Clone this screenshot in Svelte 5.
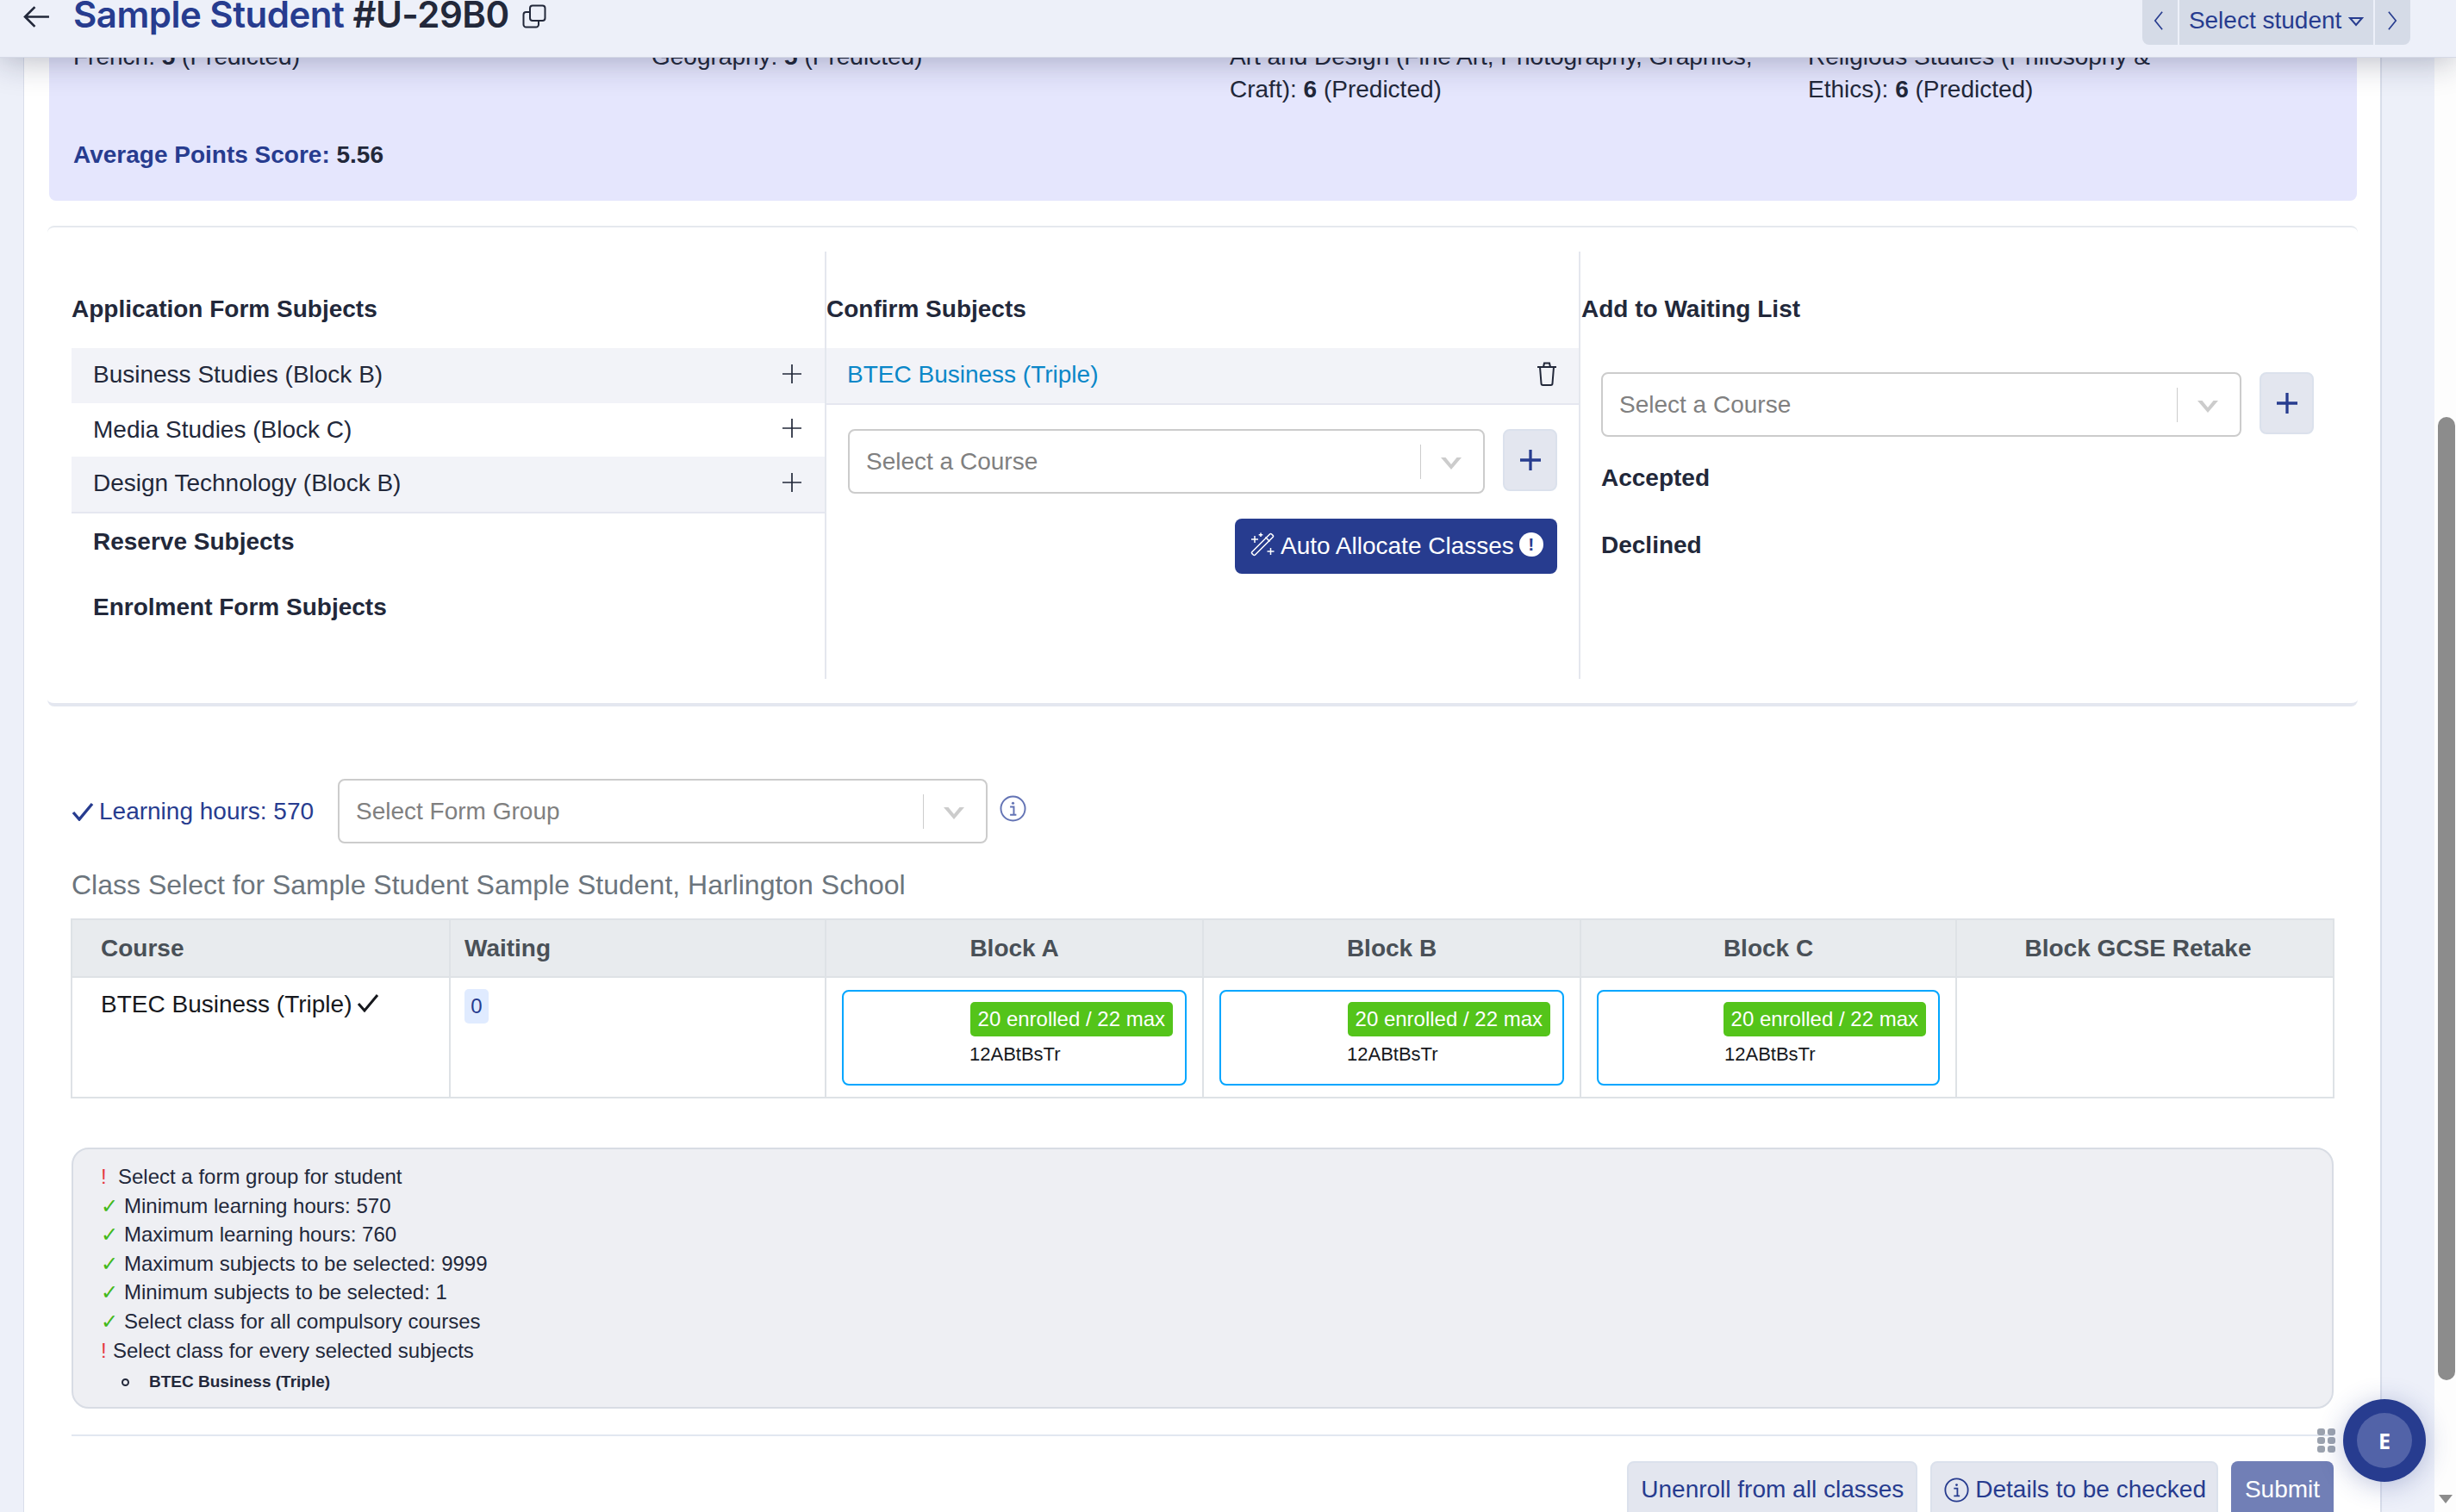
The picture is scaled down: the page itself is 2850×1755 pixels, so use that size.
<script>
  const predicted = [
    { label: "French:", grade: 5 },
    { label: "Geography:", grade: 5 },
    { label: "Art and Design (Fine Art, Photography, Graphics, Craft):", grade: 6 },
    { label: "Religious Studies (Philosophy & Ethics):", grade: 6 },
  ];
  const appSubjects = ["Business Studies (Block B)", "Media Studies (Block C)", "Design Technology (Block B)"];
  const blocks = ["Block A", "Block B", "Block C"];
  const checks = [
    { ok: false, text: "Select a form group for student", cls: "wide" },
    { ok: true, text: "Minimum learning hours: 570" },
    { ok: true, text: "Maximum learning hours: 760" },
    { ok: true, text: "Maximum subjects to be selected: 9999" },
    { ok: true, text: "Minimum subjects to be selected: 1" },
    { ok: true, text: "Select class for all compulsory courses" },
    { ok: false, text: "Select class for every selected subjects" },
  ];
</script>

{#snippet chevron()}
  <svg class="chev" viewBox="0 0 24 14"><path d="M0 0H5.500L12 8L18.500 0H24L12 14Z" fill="#ccc" /></svg>
{/snippet}

{#snippet select(text, cls)}
  <div class="select {cls}">
    <span class="ph">{text}</span>
    <i class="sep"></i>
    {@render chevron()}
  </div>
{/snippet}

{#snippet plus(cls)}
  <svg class={cls} viewBox="0 0 22 22"><path d="M11 0V22M0 11H22" fill="none" stroke="currentColor" /></svg>
{/snippet}

{#snippet info(cls)}
  <svg class={cls} viewBox="0 0 32 32">
    <circle cx="16" cy="16" r="14.5" fill="none" stroke="currentColor" stroke-width="2" />
    <circle cx="16" cy="9.5" r="1.6" fill="currentColor" />
    <path d="M12.5 14H17V23M12.5 23.5H20" fill="none" stroke="currentColor" stroke-width="2" />
  </svg>
{/snippet}

<div class="screen">
  <header>
    <svg class="back" viewBox="0 0 30 26"><path d="M29 13H2M13 2 L2 13 L13 24" fill="none" stroke="#22283a" stroke-width="2.6" /></svg>
    <h1><span>Sample Student</span> #U-29B0</h1>
    <svg class="copy" viewBox="0 0 28 28">
      <rect x="9" y="1.5" width="17.5" height="17.5" rx="3" fill="none" stroke="#22283a" stroke-width="2" />
      <path d="M9 9H4.500A3 3 0 0 0 1.500 12V23.500A3 3 0 0 0 4.500 26.500H16A3 3 0 0 0 19 23.500V19" fill="none" stroke="#22283a" stroke-width="2" />
    </svg>
    <nav class="picker">
      <button class="arrow prev"><svg viewBox="0 0 14 26"><path d="M12 2 L3 13 L12 24" fill="none" stroke="currentColor" stroke-width="1.800" /></svg></button>
      <button class="mid">Select student <svg viewBox="0 0 18 12"><path d="M2 2H16L9 10Z" fill="none" stroke="currentColor" stroke-width="2" /></svg></button>
      <button class="arrow"><svg viewBox="0 0 14 26"><path d="M2 2 L11 13 L2 24" fill="none" stroke="currentColor" stroke-width="1.800" /></svg></button>
    </nav>
  </header>

  <div class="main">
    <div class="panel">
      <section class="scores">
        <div class="score-grid">
          {#each predicted as p}
            <p>{p.label} <b>{p.grade}</b> (Predicted)</p>
          {/each}
        </div>
        <p class="average"><b>Average Points Score:</b> <strong>5.56</strong></p>
      </section>

      <section class="subjects">
        <div class="col first">
          <h3>Application Form Subjects</h3>
          <ul>
            {#each appSubjects as s, i}
              <li class:shade={i % 2 === 0} class:last={i === 2}>{s}{@render plus("plus")}</li>
            {/each}
          </ul>
          <h4 class="reserve">Reserve Subjects</h4>
          <h4 class="enrol">Enrolment Form Subjects</h4>
        </div>
        <div class="col second">
          <h3>Confirm Subjects</h3>
          <ul>
            <li class="shade last picked">
              BTEC Business (Triple)
              <svg class="bin" viewBox="0 0 24 28"><path d="M1 6H23M4 6 L5.500 25A2 2 0 0 0 7.500 27H16.500A2 2 0 0 0 18.500 25L20 6M8 6 L9 1.500H15L16 6" fill="none" stroke="#22283a" stroke-width="2" /></svg>
            </li>
          </ul>
          <div class="pick-row">
            {@render select("Select a Course", "grow")}
            <button class="add">{@render plus("plus-b")}</button>
          </div>
          <div class="auto-row">
            <button class="auto">
              <svg class="wand" viewBox="0 0 28 28">
                <rect x="-2.500" y="-16" width="5" height="32" rx="1.500" transform="translate(14 14) rotate(45)" fill="none" stroke="#fff" stroke-width="1.500" />
                <path d="M17.500 5.500L22.500 10.500M5 4V12M1 8H9M12 0.500V5M9.700 2.700H14.300M23.500 18V26M19.500 22H27.500" fill="none" stroke="#fff" stroke-width="1.500" />
              </svg>
              <span>Auto Allocate Classes</span>
              <span class="bang">!</span>
            </button>
          </div>
        </div>
        <div class="col third">
          <h3>Add to Waiting List</h3>
          <div class="wait-row">
            {@render select("Select a Course", "grow")}
            <button class="add">{@render plus("plus-b")}</button>
          </div>
          <h4 class="accepted">Accepted</h4>
          <h4 class="declined">Declined</h4>
        </div>
      </section>

      <div class="form-row">
        <svg class="tick" viewBox="0 0 26 22"><path d="M2 12 L9 20 L24 2" fill="none" stroke="#273c8f" stroke-width="3.400" /></svg>
        <span class="hours">Learning hours: 570</span>
        {@render select("Select Form Group", "form-select")}
        {@render info("form-info")}
      </div>

      <h2>Class Select for Sample Student Sample Student, Harlington School</h2>

      <table>
        <colgroup>
          <col class="c-course" /><col class="c-wait" /><col class="c-block" /><col class="c-block" /><col class="c-wait" /><col class="c-block" />
        </colgroup>
        <thead>
          <tr>
            <th class="left">Course</th>
            <th class="left wait">Waiting</th>
            {#each blocks as b}<th>{b}</th>{/each}
            <th class="retake">Block GCSE Retake</th>
          </tr>
        </thead>
        <tbody>
          <tr>
            <td class="course">BTEC Business (Triple) <svg viewBox="0 0 26 22"><path d="M2 12 L9 20 L24 2" fill="none" stroke="#16181d" stroke-width="3" /></svg></td>
            <td class="wait"><span class="zero">0</span></td>
            {#each blocks as b}
              <td class="slot">
                <div class="klass">
                  <span class="count">20 enrolled / 22 max</span>
                  <span class="code">12ABtBsTr</span>
                </div>
              </td>
            {/each}
            <td></td>
          </tr>
        </tbody>
      </table>

      <div class="alert">
        {#each checks as c}
          <div class="check">
            {#if c.ok}<span class="yes">✓</span>{:else}<span class="no" class:wide={c.cls}>!</span>{/if}{c.text}
          </div>
        {/each}
        <ul class="missing"><li>BTEC Business (Triple)</li></ul>
      </div>

      <hr />

      <div class="actions">
        <button class="ghost">Unenroll from all classes</button>
        <button class="ghost details">{@render info("btn-info")}<span>Details to be checked</span></button>
        <button class="submit">Submit</button>
      </div>
    </div>

    <div class="gutter"></div>
  </div>

  <div class="scrollbar">
    <div class="thumb"></div>
    <svg class="down" viewBox="0 0 16 10"><path d="M0 0H16L8 10Z" fill="#8c8c8c" /></svg>
  </div>

  <div class="dots">{#each Array(6) as _}<i></i>{/each}</div>
  <div class="fab"><span>E</span></div>
</div>

<style>
  :global(body) {
    margin: 0;
    overflow: hidden;
    font-family: "Liberation Sans", Arial, sans-serif;
    color: #22283a;
  }
  .screen {
    display: flex;
    height: 1755px;
    overflow: hidden;
    position: relative;
    background: #edf0f9;
  }
  header {
    position: absolute;
    top: 0;
    left: 0;
    right: 0;
    height: 66px;
    padding: 0 53px 0 27px;
    display: flex;
    align-items: flex-start;
    background: #edf0f9;
    border-bottom: 1px solid #d5d9e6;
    box-shadow: 0 2px 40px rgba(20, 25, 60, 0.32);
    z-index: 5;
  }
  .back {
    width: 31px;
    height: 27px;
    margin-top: 6px;
    flex: none;
  }
  h1 {
    margin: 0 15px 0 27px;
    font: 600 42px/34px Inter, sans-serif;
    letter-spacing: -0.5px;
    color: #22283a;
    white-space: nowrap;
  }
  h1 span { color: #273c8f; }
  .copy {
    width: 28px;
    height: 28px;
    margin-top: 5px;
    flex: none;
  }
  .picker {
    margin-left: auto;
    width: 311px;
    height: 52px;
    display: flex;
    background: #d5dbe7;
    border-radius: 0 0 8px 8px;
    color: #273c8f;
  }
  .picker button {
    border: 0;
    background: none;
    color: inherit;
    padding: 0;
    height: 100%;
    font: 28px "Liberation Sans", sans-serif;
    display: flex;
    align-items: center;
    justify-content: center;
  }
  .arrow { width: 41px; flex: none; }
  .arrow svg { width: 13px; height: 24px; margin-top: -4px; }
  .prev svg { margin-left: -5px; }
  .picker .mid {
    flex: 1;
    border-left: 2px solid #edf0f9;
    border-right: 2px solid #edf0f9;
    gap: 8px;
    white-space: pre;
    padding-bottom: 4px;
  }
  .mid svg { width: 18px; height: 12px; margin-left: -8px; margin-top: 2px; }

  .main {
    flex: 1;
    display: flex;
    padding-left: 27px;
    min-width: 0;
  }
  .panel {
    width: 2737px;
    box-sizing: border-box;
    background: #fff;
    border-left: 1px solid #d9deea;
    border-right: 2px solid #d9deea;
    padding: 0 0 0 29px;
    font-size: 28px;
  }
  .gutter { flex: 1; }

  .scores {
    width: 2678px;
    height: 233px;
    box-sizing: border-box;
    padding: 47px 28px 0;
    background: #e5e6fd;
    border-radius: 0 0 8px 8px;
    line-height: 38px;
  }
  .scores p { margin: 0; }
  .score-grid {
    display: grid;
    grid-template-columns: repeat(4, 671px);
    height: 114px;
  }
  .score-grid p { padding-right: 30px; color: #22283a; }
  .score-grid p:last-child { max-width: 440px; }
  .average b { color: #273c8f; }

  .subjects {
    width: 2681px;
    height: 558px;
    margin-top: 29px;
    box-sizing: border-box;
    margin-left: -2px;
    border-top: 2px solid #e5e9ee;
    border-bottom: 4px solid #e4e7f0;
    border-radius: 8px;
    padding: 28px 0;
    display: grid;
    grid-template-columns: 902px 875px 1fr;
  }
  .col { position: relative; }
  .col + .col { border-left: 2px solid #e4e7ee; }
  .first { padding-left: 28px; }
  .third { padding-left: 1px; }
  h3 {
    margin: 0;
    height: 112px;
    padding-top: 48px;
    font-size: 28px;
    line-height: 38px;
    font-weight: 700;
    box-sizing: border-box;
  }
  .col ul { list-style: none; margin: 0; padding: 0; }
  .col li {
    height: 62px;
    line-height: 61px;
    padding-left: 25px;
    position: relative;
  }
  .col li.shade { background: #f2f3f8; height: 64px; }
  .col li.last { border-bottom: 2px solid #e5e7f0; }
  .second li.picked { color: #0a87c8; padding-left: 24px; }
  .plus {
    position: absolute;
    right: 27px;
    top: calc(50% - 13px);
    width: 22px;
    height: 22px;
    color: #22283a;
    stroke-width: 1.7;
  }
  .bin {
    position: absolute;
    right: 25px;
    top: 16px;
    width: 24px;
    height: 28px;
  }
  h4 {
    margin: 0;
    font-size: 28px;
    line-height: 38px;
    font-weight: 700;
  }
  .reserve { margin: 14px 0 0 25px; }
  .enrol { margin: 38px 0 0 25px; }

  .select {
    height: 75px;
    box-sizing: border-box;
    border: 2px solid #ccc;
    border-radius: 8px;
    background: #fff;
    display: flex;
    align-items: center;
    padding-left: 19px;
    position: relative;
  }
  .grow { flex: 1; }
  .ph { flex: 1; color: #808080; }
  .sep { width: 1px; height: 40px; background: #ccc; margin-right: 23px; }
  .chev { width: 24px; height: 14px; margin-right: 25px; margin-top: 4px; }
  .add {
    width: 63px;
    height: 72px;
    padding: 0;
    background: #e3e6ef;
    border: 2px solid #dbe1ec;
    border-radius: 8px;
    color: #273c8f;
    display: flex;
    align-items: center;
    justify-content: center;
  }
  .plus-b { width: 24px; height: 24px; stroke-width: 3; }
  .pick-row {
    display: flex;
    gap: 21px;
    margin: 28px 25px 0 25px;
  }
  .auto-row {
    display: flex;
    justify-content: flex-end;
    margin: 29px 25px 0 0;
  }
  .auto {
    height: 64px;
    width: 374px;
    padding: 0 0 0 18px;
    border: 0;
    border-radius: 8px;
    background: #273c8f;
    color: #fff;
    display: flex;
    align-items: center;
    font: 28px/34px "Liberation Sans", sans-serif;
  }
  .wand { width: 28px; height: 28px; margin-right: 7px; margin-top: -4px; flex: none; }
  .bang {
    width: 28px;
    height: 28px;
    margin-left: 6px;
    margin-top: -4px;
    border-radius: 50%;
    background: #fff;
    color: #273c8f;
    font: 700 21px/28px "Liberation Sans", sans-serif;
    text-align: center;
  }
  .wait-row {
    display: flex;
    gap: 21px;
    margin: 28px 51px 0 23px;
  }
  .accepted { margin: 29px 0 0 23px; }
  .declined { margin: 40px 0 0 23px; }

  .form-row {
    display: flex;
    align-items: center;
    margin: 84px 0 0 26px;
    height: 75px;
    color: #273c8f;
  }
  .tick { width: 26px; height: 22px; margin-right: 6px; flex: none; }
  .hours { width: 277px; white-space: nowrap; }
  .form-select { width: 754px; color: #22283a; }
  .form-info { width: 31px; height: 31px; margin-left: 14px; margin-top: -6px; color: #6373b4; }

  h2 {
    margin: 27px 0 0 26px;
    font-size: 32px;
    font-weight: 400;
    line-height: 42px;
    color: #6c757d;
  }

  table {
    margin: 18px 0 0 25px;
    width: 2625px;
    height: 209px;
    border-collapse: collapse;
    table-layout: fixed;
    font-size: 28px;
  }
  .c-course { width: 439px; }
  .c-wait { width: 436px; }
  .c-block { width: 438px; }
  th, td { border: 2px solid #dee2e6; padding: 0; }
  th {
    background: #e8ebee;
    height: 65px;
    font-weight: 700;
    color: #495057;
  }
  th.left { text-align: left; padding-left: 33px; }
  th.wait { padding-left: 16px; }
  th.retake { padding-right: 16px; }
  td { vertical-align: top; }
  .course { padding: 14px 0 0 33px; color: #16181d; line-height: 34px; }
  .course svg { width: 26px; height: 22px; margin-left: -2px; }
  td.wait { padding: 13px 0 0 16px; }
  .zero {
    display: inline-block;
    width: 28px;
    height: 40px;
    border-radius: 5px;
    background: #e0ebff;
    color: #273c8f;
    font-size: 24px;
    line-height: 40px;
    text-align: center;
  }
  .slot { padding: 14px 18px 0; }
  .klass {
    height: 111px;
    box-sizing: border-box;
    border: 2px solid #00a6ff;
    border-radius: 8px;
    display: flex;
    flex-direction: column;
    align-items: flex-end;
    padding: 12px 14px 0 0;
  }
  .count {
    background: #54c41a;
    color: #fff;
    font-size: 24px;
    line-height: 40px;
    height: 40px;
    padding: 0 9px;
    border-radius: 5px;
    white-space: nowrap;
  }
  .code {
    align-self: flex-start;
    margin: 4px 0 0 146px;
    font-size: 22px;
    line-height: 34px;
    color: #16181d;
  }

  .alert {
    margin: 57px 0 0 26px;
    width: 2625px;
    height: 303px;
    box-sizing: border-box;
    background: #eeeff3;
    border: 2px solid #d8dce4;
    border-radius: 20px;
    padding: 15px 32px 0;
    font-size: 24px;
    line-height: 33.6px;
  }
  .check { height: 33.6px; white-space: nowrap; }
  .yes {
    display: inline-block;
    width: 27px;
    color: #43b91a;
    font: 24px/24px "DejaVu Sans", sans-serif;
  }
  .no { display: inline-block; width: 14px; color: #e63946; }
  .no.wide { width: 20px; }
  .missing {
    margin: 5px 0 0;
    padding: 0 0 0 24px;
    list-style: none;
    font-size: 19px;
    font-weight: 700;
    line-height: 30px;
  }
  .missing li { display: flex; align-items: center; gap: 23px; }
  .missing li::before {
    content: "";
    width: 9px;
    height: 9px;
    box-sizing: border-box;
    border: 2px solid #22283a;
    border-radius: 50%;
  }
  hr {
    border: 0;
    height: 2px;
    margin: 30px 0 0 26px;
    width: 2625px;
    background: #e2e7f0;
  }
  .actions {
    display: flex;
    justify-content: flex-end;
    gap: 15px;
    margin: 29px 0 0 26px;
    width: 2625px;
  }
  .actions button {
    height: 66px;
    font: 28px "Liberation Sans", sans-serif;
    border-radius: 8px;
    padding: 0 14px;
    display: flex;
    align-items: center;
    color: #273c8f;
  }
  .ghost { background: #e3e6ef; border: 2px solid #dbe1ec; }
  .actions .details { padding-right: 12px; }
  .actions .submit { width: 119px; justify-content: center; background: #717fb6; color: #fff; border: 0; }
  .btn-info { width: 29px; height: 29px; margin-right: 7px; flex: none; }

  .scrollbar {
    width: 25px;
    flex: none;
    background: #fdfdfd;
    position: relative;
  }
  .thumb {
    position: absolute;
    left: 4px;
    right: 1px;
    top: 484px;
    height: 1118px;
    border-radius: 10px;
    background: #8c8c8c;
  }
  .down {
    position: absolute;
    left: 5px;
    top: 1735px;
    width: 16px;
    height: 10px;
  }
  .dots {
    position: absolute;
    left: 2689px;
    top: 1658px;
    display: grid;
    grid-template-columns: 9px 9px;
    gap: 2px 3px;
    z-index: 6;
  }
  .dots i { height: 8px; border-radius: 3px; background: #9ca3af; }
  .fab {
    position: absolute;
    left: 2719px;
    top: 1624px;
    width: 96px;
    height: 96px;
    border-radius: 50%;
    background: #273c8f;
    box-shadow: 0 4px 30px rgba(39, 60, 143, 0.3);
    display: flex;
    align-items: center;
    justify-content: center;
    z-index: 6;
  }
  .fab span {
    width: 64px;
    height: 64px;
    border-radius: 50%;
    background: #5263a8;
    color: #fff;
    font: 700 25px/64px "Open Sans", sans-serif;
    text-align: center;
  }
</style>
